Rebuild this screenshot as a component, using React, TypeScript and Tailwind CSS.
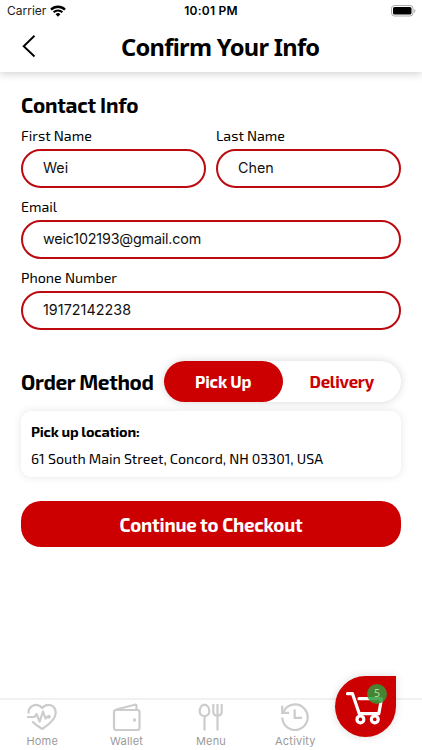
import React, { useState } from "react";

const exo = "font-['Exo_2','Noto_Sans',sans-serif]";

function Field({ label, defaultValue, inputClass = "" }: { label: string; defaultValue: string; inputClass?: string }) {
    return (
        <label className="flex flex-col flex-1 min-w-0">
            <span className={`${exo} h-[22px] text-[14.25px] leading-[22px] whitespace-nowrap`}>{label}</span>
            <input
                type="text"
                defaultValue={defaultValue}
                className={`mt-[2px] h-[39px] w-full rounded-full border-2 border-[#bd0a10] bg-white pl-5 pr-4 pb-[2px] font-['Inter',sans-serif] text-[14.3px] text-[#111] focus:outline-none ${inputClass}`}
            />
        </label>
    );
}

function StatusBar() {
    return (
        <div className="relative flex h-[22px] items-center justify-between pl-[7px] pr-[6px] font-['Inter',sans-serif]">
            <div className="flex items-center gap-1">
                <span className="text-[12px] text-[#222]">Carrier</span>
                <svg width="16" height="12" viewBox="0 0 16 12" fill="none" stroke="#000">
                    <path d="M1 4.6a10 10 0 0 1 14 0" strokeWidth="2.3" />
                    <path d="M3.6 7.2a6.3 6.3 0 0 1 8.8 0" strokeWidth="2" />
                    <path d="M8 11.7 5.6 9.2a3.5 3.5 0 0 1 4.8 0z" fill="#000" stroke="none" />
                </svg>
            </div>
            <span className="absolute left-0 w-full text-center text-[12px] font-semibold tracking-[0.25px]">10:01 PM</span>
            <svg width="25" height="12" viewBox="0 0 25 12">
                <rect x="0.5" y="0.5" width="21.5" height="10.5" rx="3" fill="none" stroke="#aaa" />
                <rect x="2" y="2" width="18.5" height="7.5" rx="1.6" />
                <path d="M23.2 4v4c1.6-.8 1.6-3.2 0-4z" fill="#aaa" />
            </svg>
        </div>
    );
}

function HomeIcon() {
    return (
        <svg width="32" height="28" viewBox="0 0 32 28" fill="none" stroke="#ccc" strokeWidth="2.2" strokeLinejoin="round">
            <path d="M2.7 10.5C1.5 3.5 10.5-1.5 16.2 5 21-1 30 2 29.7 10.5 29.4 16.5 23 21.5 16.2 26 12.5 23.8 9 21.3 6.2 18.5" />
            <path d="M1 14h7.5l2-3 3.2 7.5L17 8.5l2.5 7 1.8-1.7H22" />
            <circle cx="22.8" cy="13.8" r="2" fill="#ccc" stroke="none" />
        </svg>
    );
}

function WalletIcon() {
    return (
        <svg width="32" height="28" viewBox="0 0 32 28" fill="none" stroke="#ccc" strokeWidth="2.2" strokeLinejoin="round">
            <rect x="3" y="7" width="25.5" height="20" rx="2" />
            <path d="m5 6.5 19-4.8c1-.2 1.5.2 1.5 1.2v3.8" />
            <circle cx="23.5" cy="17" r="1.7" fill="#ccc" stroke="none" />
        </svg>
    );
}

function MenuIcon() {
    return (
        <svg width="32" height="28" viewBox="0 0 32 28" fill="none" stroke="#ccc" strokeWidth="2.2">
            <path d="M9.5 1.6c3 0 4.8 3.5 4.8 6.6 0 2.8-2 4.8-4.8 4.8s-4.8-2-4.8-4.8c0-3.1 1.8-6.6 4.8-6.6zM9.5 13v14.5M22.5 1v26.5M18.3 1v7.5c0 2.8 1.6 4.2 4.2 4.2s4.2-1.4 4.2-4.2V1" />
        </svg>
    );
}

function ActivityIcon() {
    return (
        <svg width="32" height="28" viewBox="0 0 32 28" fill="none" stroke="#ccc" strokeWidth="2.2">
            <path d="M4.5 8.8A12.7 12.7 0 1 1 3.3 14.5" />
            <path d="M3.2 2.8v7h7M15.7 6.5v8.3H23" />
        </svg>
    );
}

const tabs = [
    { label: "Home", icon: HomeIcon },
    { label: "Wallet", icon: WalletIcon },
    { label: "Menu", icon: MenuIcon },
    { label: "Activity", icon: ActivityIcon },
];

export default function App() {
    const [method, setMethod] = useState("pickup");

    return (
        <div className="relative flex h-[750px] w-[422px] flex-col overflow-hidden bg-white text-black">
            <header className="h-[72px] bg-white shadow-[0_2px_8px_rgba(0,0,0,0.18)]">
                <StatusBar />
                <div className="flex h-[50px] items-center">
                    <button className="ml-[21px] w-[30px] pb-[2px]" aria-label="Back">
                        <svg width="16" height="24" viewBox="0 0 16 24" fill="none" stroke="#000" strokeWidth="1.9">
                            <path d="M13.5 1.7 2.7 12.2l10.8 10.3" />
                        </svg>
                    </button>
                    <h1 className="ml-[70px] whitespace-nowrap font-['Noto_Sans',sans-serif] text-[23.7px] font-bold leading-[50px] tracking-[-0.72px]">Confirm Your Info</h1>
                </div>
            </header>

            <main className="flex flex-1 flex-col px-[21px] pt-5">
                <h2 className={`${exo} h-[33px] whitespace-nowrap text-[20.8px] font-bold leading-[26px] tracking-[-0.24px]`}>Contact Info</h2>
                <div className="flex gap-[10px]">
                    <Field label="First Name" defaultValue="Wei" />
                    <Field label="Last Name" defaultValue="Chen" />
                </div>
                <div className="mt-[8px] flex">
                    <Field label="Email" defaultValue="weic102193@gmail.com" inputClass="tracking-[-0.17px]" />
                </div>
                <div className="mt-[8px] flex">
                    <Field label="Phone Number" defaultValue="19172142238" inputClass="tracking-[0.05px]" />
                </div>

                <div className="mt-[31px] flex items-center justify-between">
                    <h2 className={`${exo} whitespace-nowrap text-[20.8px] font-bold tracking-[-0.34px]`}>Order Method</h2>
                    <div className="flex h-[41px] w-[237px] rounded-full bg-white shadow-[0_0_8px_rgba(0,0,0,0.16)]">
                        <button
                            onClick={() => setMethod("pickup")}
                            className={`${exo} w-1/2 rounded-full text-[16.7px] font-bold tracking-[-0.2px] ${method === "pickup" ? "bg-[#cc0000] text-white" : "text-[#cc0000]"}`}
                        >
                            Pick Up
                        </button>
                        <button
                            onClick={() => setMethod("delivery")}
                            className={`${exo} w-1/2 rounded-full text-[16.7px] font-bold tracking-[-0.2px] ${method === "delivery" ? "bg-[#cc0000] text-white" : "text-[#cc0000]"}`}
                        >
                            Delivery
                        </button>
                    </div>
                </div>

                <div className={`${exo} mt-[9px] h-[66px] rounded-[10px] bg-white px-[10px] pt-[11px] shadow-[0_0_8px_rgba(0,0,0,0.1)]`}>
                    <p className="text-[14.5px] font-bold leading-[20px] tracking-[-0.2px]">Pick up location:</p>
                    <p className="mt-[7px] whitespace-nowrap text-[14.2px] leading-[20px]">61 South Main Street, Concord, NH 03301, USA</p>
                </div>

                <button className={`${exo} mt-6 h-[46px] rounded-[20px] bg-[#cc0000] pt-[2px] text-[18.7px] font-bold tracking-[-0.23px] text-white`}>
                    Continue to Checkout
                </button>
            </main>

            <nav className="flex h-[52px] border-t-2 border-[#f1f1f1] bg-white font-['Inter',sans-serif]">
                {tabs.map(({ label, icon: Icon }) => (
                    <div key={label} className="flex w-1/5 flex-col items-center pt-[3px]">
                        <Icon />
                        <span className="mt-[3px] text-[11px] leading-[15px] tracking-[0.2px] text-[#999]">{label}</span>
                    </div>
                ))}
            </nav>

            {/* Floating cart */}
            <button className="absolute left-[335px] top-[676px] h-[61px] w-[61px] rounded-full rounded-tr-none bg-[#cc0000] shadow-[0_0_8px_rgba(0,0,0,0.15)]" aria-label="Cart">
                <svg width="61" height="61" viewBox="0 0 61 61" fill="none" stroke="#fff" strokeWidth="3.2" strokeLinecap="round" strokeLinejoin="round">
                    <path d="M12.5 17.7H17.5l6.8 20h19.5M24 22.7H46.5L43.8 37.7" />
                    <circle cx="25.4" cy="43.4" r="3.4" />
                    <circle cx="39.8" cy="43.4" r="3.4" />
                </svg>
                <span className="absolute left-[32px] top-[8px] flex h-5 w-5 items-center justify-center rounded-full bg-[#2e9b3c]/85 font-['Noto_Sans',sans-serif] text-[10.5px] text-[#b5d8a0]">5</span>
            </button>
        </div>
    );
}
